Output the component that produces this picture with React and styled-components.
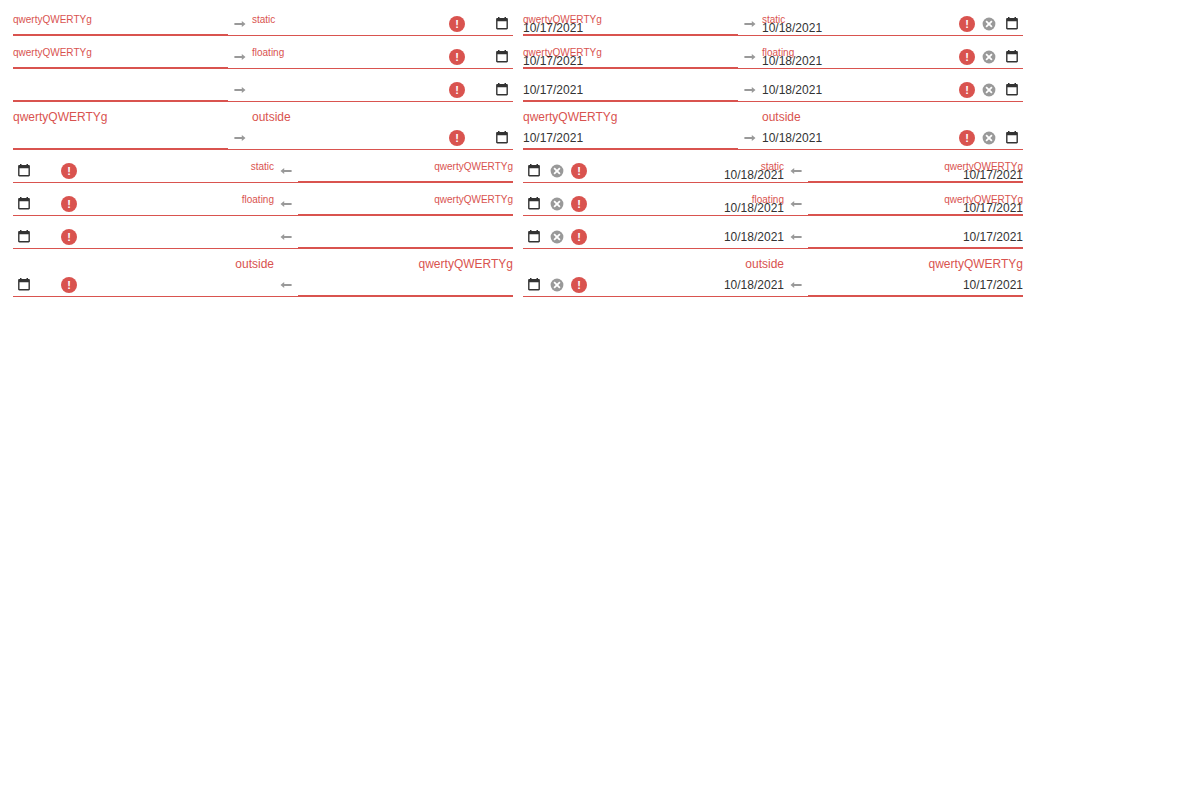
import React, { useId, useState } from "react";
import styled, { createGlobalStyle, css } from "styled-components";

const GlobalStyle = createGlobalStyle`
  *, *::before, *::after { box-sizing: border-box; }
  body {
    margin: 0;
    background: #fff;
    color: #333;
    font: 12px "Liberation Sans", Arial, sans-serif;
  }
`;

const danger = "#d9534f";

const Page = styled.main`
  display: grid;
  grid-template-columns: repeat(2, minmax(0, 500px));
  gap: 10px;
  padding: 13px;
`;

const RangeBox = styled.div`
  display: flex;
  align-items: flex-end;
  border-bottom: 1px solid ${danger};
`;

const Field = styled.div`
  flex: 1;
  min-width: 0;
  display: grid;
  grid-template-columns: minmax(0, 1fr) auto;
  grid-template-rows: ${(p) => (p.$mode === "outside" ? "15px 22px" : "22px")};
  ${(p) => p.$active && css`box-shadow: inset 0 -1px ${danger};`}
`;

const Label = styled.label`
  grid-area: 1 / 1;
  color: ${danger};
  white-space: nowrap;
  ${(p) =>
    p.$mode === "outside"
      ? css`
          font-size: 12px;
          line-height: 10px;
        `
      : css`
          font-size: 10px;
          line-height: 14px;
        `}
`;

const DateInput = styled.input`
  grid-area: ${(p) => (p.$mode === "outside" ? "2 / 1" : "1 / 1")};
  width: 100%;
  min-width: 0;
  height: 22px;
  margin: 0;
  padding: ${(p) => (p.$mode === "inside" ? "8px 0 0" : "0")};
  border: 0;
  outline: 0;
  background: transparent;
  color: inherit;
  font: inherit;
`;

const InvalidMark = styled.span`
  grid-area: ${(p) => (p.$mode === "outside" ? "2 / 2" : "1 / 2")};
  align-self: center;
  width: 16px;
  height: 16px;
  margin-inline-end: 2px;
  border-radius: 50%;
  background: ${danger};
  color: #fff;
  font-size: 11px;
  font-weight: bold;
  line-height: 16px;
  text-align: center;
`;

const Separator = styled.span`
  width: 24px;
  height: 22px;
  display: flex;
  align-items: center;
  justify-content: center;
  color: #999;

  [dir="rtl"] & svg {
    transform: scaleX(-1);
  }
`;

const IconButton = styled.button`
  width: 22px;
  height: 22px;
  margin: 0;
  margin-inline-start: 1px;
  padding: 0;
  border: 0;
  background: transparent;
  color: ${(p) => (p.$muted ? "#999" : "#333")};
  display: flex;
  align-items: center;
  justify-content: center;
  visibility: ${(p) => (p.$hidden ? "hidden" : "visible")};
  cursor: pointer;
`;

const ArrowIcon = () => (
  <svg width="12" height="12" viewBox="0 0 12 12" fill="currentColor" aria-hidden="true">
    <path d="M.4 5h7.400V3L11.500 6 7.800 9V7H.4z" />
  </svg>
);

const ClearIcon = () => (
  <svg width="14" height="14" viewBox="0 0 14 14" aria-hidden="true">
    <circle cx="7" cy="7" r="6.4" fill="currentColor" />
    <path d="M4.1 4.1l5.8 5.8M9.900 4.100L4.100 9.900" stroke="#fff" strokeWidth="1.8" />
  </svg>
);

const CalendarIcon = () => (
  <svg width="14" height="14" viewBox="0 0 14 14" fill="currentColor" aria-hidden="true">
    <path
      fillRule="evenodd"
      d="M3 0h1.500V1h5V0H11V1h.700c.7 0 1.200.5 1.200 1.200v9c0 .7-.5 1.200-1.200 1.200H2.300c-.7 0-1.200-.5-1.200-1.200V2.200C1.100 1.500 1.600 1 2.300 1H3zM2.500 4.200v6.800h9V4.200z"
    />
  </svg>
);

function RangeField({ label, mode, value, active, title, onChange }) {
  const id = useId();
  return (
    <Field $mode={mode} $active={active}>
      {label && <Label htmlFor={id} $mode={mode}>{label}</Label>}
      <DateInput
        id={id}
        $mode={mode}
        type="text"
        aria-label={label ? undefined : title}
        aria-invalid="true"
        value={value}
        onChange={(e) => onChange(e.target.value)}
      />
      {!active && <InvalidMark $mode={mode}>!</InvalidMark>}
    </Field>
  );
}

function DateRangeBox({ dir, labelMode, filled }) {
  const [start, setStart] = useState(filled ? "10/17/2021" : "");
  const [end, setEnd] = useState(filled ? "10/18/2021" : "");
  const hasLabel = labelMode !== "hidden";
  const mode = labelMode === "outside" ? "outside" : hasLabel ? "inside" : "none";
  const clear = () => {
    setStart("");
    setEnd("");
  };

  return (
    <RangeBox dir={dir}>
      <RangeField
        label={hasLabel ? "qwertyQWERTYg" : ""}
        title="Start date"
        mode={mode}
        value={start}
        onChange={setStart}
        active
      />
      <Separator>
        <ArrowIcon />
      </Separator>
      <RangeField
        label={hasLabel ? labelMode : ""}
        title="End date"
        mode={mode}
        value={end}
        onChange={setEnd}
      />
      <IconButton type="button" aria-label="Clear" $muted $hidden={!start && !end} onClick={clear}>
        <ClearIcon />
      </IconButton>
      <IconButton type="button" aria-label="Open calendar">
        <CalendarIcon />
      </IconButton>
    </RangeBox>
  );
}

const directions = ["ltr", "rtl"];
const labelModes = ["static", "floating", "hidden", "outside"];

export default function App() {
  return (
    <>
      <GlobalStyle />
      <Page>
        {directions.flatMap((dir) =>
          labelModes.flatMap((labelMode) =>
            [false, true].map((filled) => (
              <DateRangeBox
                key={`${dir}-${labelMode}-${filled}`}
                dir={dir}
                labelMode={labelMode}
                filled={filled}
              />
            ))
          )
        )}
      </Page>
    </>
  );
}
